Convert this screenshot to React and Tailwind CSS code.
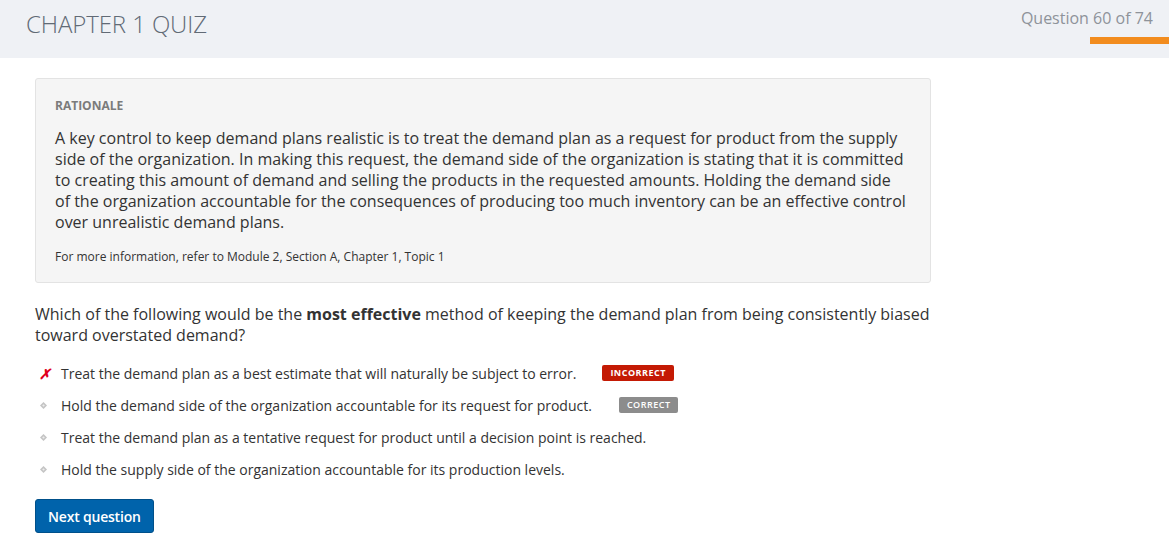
import { useState } from 'react'

const options = [
  { text: 'Treat the demand plan as a best estimate that will naturally be subject to error.', status: 'incorrect' },
  { text: 'Hold the demand side of the organization accountable for its request for product.', status: 'correct' },
  { text: 'Treat the demand plan as a tentative request for product until a decision point is reached.' },
  { text: 'Hold the supply side of the organization accountable for its production levels.' },
]

function Bullet({ status }) {
  if (status === 'incorrect') {
    return <span className="w-[23px] shrink-0 pl-[1px] text-[14px] font-bold italic text-[#e0001b]">✗</span>
  }
  return (
    <span className="flex w-[23px] shrink-0 items-center pl-[2px]">
      <svg width="7" height="7" viewBox="0 0 8 8">
        <path d="M4 0 L8 4 L4 8 L0 4 Z" fill="#c4c4c4" />
        <path d="M4 2.5 L5.5 4 L4 5.5 L2.5 4 Z" fill="#ececec" />
      </svg>
    </span>
  )
}

export default function App() {
  const [current] = useState(60)
  const total = 74

  return (
    <div className="min-h-[549px] bg-white text-[#333] [font-family:'Open_Sans',sans-serif]">
      <header className="flex h-[58px] items-start justify-between bg-[#eff1f5]">
        <h1 className="pl-[26px] pt-[6px] text-[24px] font-light tracking-[-0.1px] text-[#616a75]">CHAPTER 1 QUIZ</h1>
        <div className="flex flex-col items-end pt-[6px]">
          <div className="pr-[16px] text-[16px] text-[#8e939a]">Question {current} of {total}</div>
          <div className="mt-[7px] h-[7px] w-[79px] bg-[#f28c1e]" />
        </div>
      </header>

      <main className="w-[896px] pl-[35px] pt-[20px] box-content">
        <section className="rounded-[3px] border border-[#e3e3e3] bg-[#f5f5f5] pl-[19px] pr-[23px] pt-[18px] pb-[17px]">
          <h2 className="text-[12px] font-bold leading-[17px] text-[#7b7b7b]">RATIONALE</h2>
          <p className="mt-[14px] text-[16px] leading-[21px] text-[#333]">
            A key control to keep demand plans realistic is to treat the demand plan as a request for product from the supply side of the organization. In making this request, the demand side of the organization is stating that it is committed to creating this amount of demand and selling the products in the requested amounts. Holding the demand side of the organization accountable for the consequences of producing too much inventory can be an effective control over unrealistic demand plans.
          </p>
          <p className="mt-[15px] text-[12px] leading-[17px] text-[#333]">For more information, refer to Module 2, Section A, Chapter 1, Topic 1</p>
        </section>

        <p className="mt-[21px] text-[16px] leading-[21px] text-[#333]">
          Which of the following would be the <strong className="font-bold">most effective</strong> method of keeping the demand plan from being consistently biased toward overstated demand?
        </p>

        <ul className="mt-[11px] flex flex-col">
          {options.map((o, i) => (
            <li key={i} className="flex h-[32px] items-center pl-[3px] text-[14px] text-[#333]">
              <Bullet status={o.status} />
              <span>{o.text}</span>
              {o.status === 'incorrect' && (
                <span className="ml-[26px] rounded-[2px] bg-[#c41a04] px-[8px] py-[3px] text-[9px] font-bold leading-[10px] tracking-[0.5px] text-white">INCORRECT</span>
              )}
              {o.status === 'correct' && (
                <span className="ml-[27px] rounded-[2px] bg-[#8c8c8c] px-[8px] py-[3px] text-[9px] font-semibold leading-[10px] tracking-[0.5px] text-white">CORRECT</span>
              )}
            </li>
          ))}
        </ul>

        <button className="mt-[14px] h-[34px] rounded-[3px] border border-[#00508a] bg-[#0063ab] px-[12px] text-[14px] font-semibold tracking-[-0.2px] text-white">
          Next question
        </button>
      </main>
    </div>
  )
}
